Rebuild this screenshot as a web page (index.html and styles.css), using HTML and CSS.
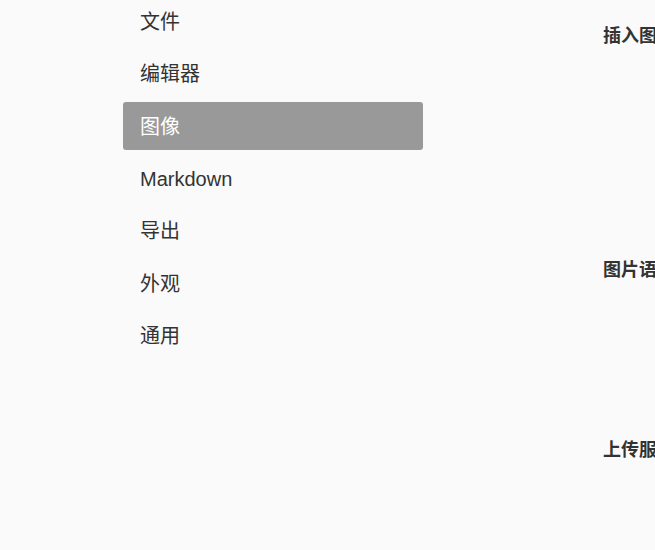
FILE: index.html
```html
<!DOCTYPE html>
<html lang="zh-CN">
<head>
<meta charset="utf-8">
<title>偏好设置</title>
<link rel="stylesheet" href="styles.css">
</head>
<body>
<div class="window">
  <nav class="sidebar">
    <div class="nav-item">文件</div>
    <div class="nav-item">编辑器</div>
    <div class="nav-item active">图像</div>
    <div class="nav-item">Markdown</div>
    <div class="nav-item">导出</div>
    <div class="nav-item">外观</div>
    <div class="nav-item">通用</div>
  </nav>
  <main class="content">
    <section class="group group-insert">
      <h2 class="group-title">插入图片时...</h2>
    </section>
    <section class="group group-syntax">
      <h2 class="group-title">图片语法偏好</h2>
    </section>
    <section class="group group-upload">
      <h2 class="group-title">上传服务设定</h2>
    </section>
  </main>
</div>
</body>
</html>
```

FILE: styles.css
```css
html, body {
  margin: 0;
  padding: 0;
  background: #fafafa;
  overflow: hidden;
}

body {
  font-family: "Liberation Sans", "Noto Sans CJK SC", sans-serif;
  color: #333;
}

.window {
  display: flex;
  align-items: flex-start;
  width: 655px;
  height: 550px;
  overflow: hidden;
}

.sidebar {
  display: flex;
  flex-direction: column;
  gap: 4.33px;
  width: 300px;
  margin-left: 123px;
  margin-top: -3px;
  flex-shrink: 0;
}

.nav-item {
  box-sizing: border-box;
  height: 48px;
  padding-top: 3px;
  line-height: 45px;
  padding-left: 17px;
  font-size: 20px;
  color: #333;
  border-radius: 3px;
  white-space: nowrap;
}

.nav-item.active {
  background: #999;
  color: #fff;
}

.content {
  margin-left: 180px;
  padding-top: 26px;
  flex-shrink: 0;
  width: 400px;
}

.group {
  display: flex;
  flex-direction: column;
}

.group-insert { height: 234px; }
.group-syntax { height: 180px; }

.group-title {
  margin: 0;
  font-size: 18px;
  line-height: 20px;
  font-weight: bold;
  color: #333;
  white-space: nowrap;
}
```
